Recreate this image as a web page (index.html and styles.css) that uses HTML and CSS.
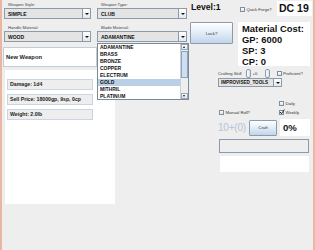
FILE: index.html
```html
<!DOCTYPE html>
<html>
<head>
    <title>Weapon Forge</title>
    <link rel="stylesheet" href="styles.css">
</head>
<body>
<div class="app">

    <div class="col col-a">
        <div class="field-label">Weapon Style:</div>
        <div class="combo"><span class="combo-text">SIMPLE</span><span class="combo-arrow"></span></div>
        <div class="field-label gap">Handle Material:</div>
        <div class="combo"><span class="combo-text">WOOD</span><span class="combo-arrow"></span></div>

        <div class="name-box">New Weapon</div>

        <div class="stats">
            <div class="stat">Damage: 1d4</div>
            <div class="stat">Sell Price: 18000gp, 9sp, 0cp</div>
            <div class="stat">Weight: 2.0lb</div>
        </div>
    </div>

    <div class="col col-b">
        <div class="field-label">Weapon Type:</div>
        <div class="combo wide"><span class="combo-text">CLUB</span><span class="combo-arrow"></span></div>
        <div class="field-label gap">Blade Material:</div>
        <div class="combo wide open">
            <span class="combo-text">ADAMANTINE</span><span class="combo-arrow"></span>

            <!-- popup list of the open combo -->
            <div class="popup">
                <ul class="popup-list">
                    <li>ADAMANTINE</li>
                    <li>BRASS</li>
                    <li>BRONZE</li>
                    <li>COPPER</li>
                    <li>ELECTRUM</li>
                    <li class="selected">GOLD</li>
                    <li>MITHRIL</li>
                    <li>PLATINUM</li>
                </ul>
                <div class="scrollbar">
                    <span class="scroll-btn up"></span>
                    <span class="scroll-track"><span class="scroll-thumb"></span></span>
                    <span class="scroll-btn down"></span>
                </div>
            </div>
        </div>
    </div>

    <div class="col col-c">
        <div class="top-row">
            <div class="level">Level:1</div>
            <label class="check-label quick"><span class="check"></span>Quick Forge?</label>
            <div class="dc">DC 19</div>
        </div>

        <div class="cost-row">
            <button class="btn lock">Lock?</button>
            <div class="cost">
                <div>Material Cost:</div>
                <div>GP: 6000</div>
                <div>SP: 3</div>
                <div>CP: 0</div>
            </div>
        </div>

        <div class="craft-area">
            <div class="skill-row">
                <span class="small-text">Crafting Skill</span>
                <span class="knob"></span>
                <span class="small-text">+0</span>
                <span class="knob"></span>
                <label class="check-label"><span class="check"></span>Proficient?</label>
            </div>
            <div class="combo tools"><span class="combo-text">IMPROVISED_TOOLS</span><span class="combo-arrow"></span></div>

            <div class="option-row daily-row">
                <label class="check-label"><span class="check"></span>Daily</label>
            </div>
            <div class="option-row">
                <label class="check-label"><span class="check"></span>Manual Roll?</label>
                <label class="check-label"><span class="check checked"><svg viewBox="0 0 6 6" width="6" height="6"><path d="M1 3 L2.5 4.6 L5.4 0.6" fill="none" stroke="#222" stroke-width="1"/></svg></span>Weekly</label>
            </div>

            <div class="roll-row">
                <span class="roll">10+(0)</span>
                <button class="btn craft">Craft</button>
                <div class="percent">0%</div>
            </div>

            <div class="progress"></div>
            <div class="log"></div>
        </div>
    </div>

</div>
</body>
</html>
```

FILE: styles.css
```css
body {
    margin: 0;
    padding: 0;
    background-color: #eeeeee;
    font-family: 'Liberation Sans', Arial, sans-serif;
    color: #222;
}

.app {
    width: 315px;
    height: 250px;
    box-sizing: border-box;
    border-left: 2px solid #e9b7a0;
    border-right: 2px solid #e9b7a0;
    display: flex;
    overflow: hidden;
}

.col {
    display: flex;
    flex-direction: column;
}

.col-a {
    width: 95px;
    padding-left: 2px;
    box-sizing: border-box;
}

.col-b {
    width: 93px;
}

.col-c {
    width: 123px;
}

.field-label {
    height: 8px;
    line-height: 9px;
    font-size: 4.2px;
    color: #444;
    padding-left: 4px;
}

.field-label.gap {
    margin-top: 4px;
}

/* combo boxes */
.combo {
    position: relative;
    width: 87px;
    height: 11px;
    box-sizing: border-box;
    border: 1px solid #8c9aaa;
    background-color: #e4e4e4;
    display: flex;
    align-items: center;
}

.combo.wide {
    width: 90px;
}

.combo-text {
    flex: 1;
    font-size: 5px;
    font-weight: bold;
    padding-left: 3px;
    color: #111;
}

.combo-arrow {
    width: 8px;
    height: 100%;
    box-sizing: border-box;
    border-left: 1px solid #8c9aaa;
    background: linear-gradient(#ffffff, #e2e8ee);
    position: relative;
}

.combo-arrow::after {
    content: "";
    position: absolute;
    left: 2px;
    top: 4px;
    border-left: 2px solid transparent;
    border-right: 2px solid transparent;
    border-top: 2px solid #111;
}

.popup {
    position: absolute;
    left: -1px;
    top: 11px;
    width: 92px;
    height: 57px;
    box-sizing: border-box;
    border: 1px solid #7a8a99;
    background-color: #ffffff;
    display: flex;
    z-index: 2;
}

.popup-list {
    list-style: none;
    margin: 0;
    padding: 0;
    flex: 1;
}

.popup-list li {
    height: 7px;
    line-height: 7px;
    font-size: 5px;
    font-weight: bold;
    padding-left: 2px;
    color: #111;
}

.popup-list li.selected {
    background-color: #b8cfe5;
}

.scrollbar {
    width: 7px;
    display: flex;
    flex-direction: column;
    border-left: 1px solid #c8d2dc;
    background-color: #eeeeee;
}

.scroll-btn {
    height: 6px;
    position: relative;
    background: linear-gradient(#ffffff, #dde5ee);
    border: 1px solid #9aa8b6;
    box-sizing: border-box;
}

.scroll-btn.up::after,
.scroll-btn.down::after {
    content: "";
    position: absolute;
    left: 1px;
    top: 1px;
    border-left: 1.5px solid transparent;
    border-right: 1.5px solid transparent;
}

.scroll-btn.up::after {
    border-bottom: 2px solid #111;
}

.scroll-btn.down::after {
    border-top: 2px solid #111;
}

.scroll-track {
    flex: 1;
    padding-top: 1px;
}

.scroll-thumb {
    display: block;
    height: 27px;
    box-sizing: border-box;
    border: 1px solid #8ba3bd;
    background-color: #cfdef0;
}

/* left column boxes */
.name-box {
    margin-top: 5px;
    margin-left: -1px;
    width: 94px;
    height: 20px;
    box-sizing: border-box;
    background-color: #ffffff;
    border: 1px solid #c4ccd4;
    font-size: 5.8px;
    font-weight: bold;
    line-height: 18px;
    padding-left: 2px;
}

.stats {
    margin-top: 3px;
    margin-left: 1px;
    width: 110px;
    height: 134px;
    box-sizing: border-box;
    background-color: #ffffff;
    padding: 9px 0 0 2px;
    display: flex;
    flex-direction: column;
    gap: 4px;
}

.stat {
    width: 86px;
    height: 11px;
    box-sizing: border-box;
    background-color: #eeeeee;
    border: 1px solid #c9d5e2;
    font-size: 5.2px;
    font-weight: bold;
    line-height: 9px;
    padding-left: 2px;
    color: #222;
}

/* right column */
.top-row {
    height: 20px;
    display: flex;
    align-items: flex-start;
}

.level {
    width: 49px;
    padding: 2px 0 0 1px;
    font-size: 8.6px;
    font-weight: bold;
    color: #111;
}

.check-label {
    display: flex;
    align-items: center;
    font-size: 4.2px;
    color: #333;
}

.check {
    width: 5px;
    height: 5px;
    box-sizing: border-box;
    border: 1px solid #7f8f9f;
    background: linear-gradient(#ffffff, #d8e2ec);
    margin-right: 1.5px;
    position: relative;
}

.check svg {
    position: absolute;
    left: -1px;
    top: -2px;
}

.quick {
    margin-top: 7px;
    width: 37px;
}

.dc {
    margin-top: 1px;
    width: 35px;
    height: 15px;
    background-color: #ffffff;
    font-size: 10.5px;
    font-weight: bold;
    line-height: 15px;
    padding-left: 2px;
    box-sizing: border-box;
    color: #111;
}

.cost-row {
    margin-top: 2px;
    display: flex;
    align-items: flex-start;
}

.btn {
    font-family: 'Liberation Sans', Arial, sans-serif;
    font-size: 4.4px;
    color: #333;
    border: 1px solid #8b9bab;
    border-radius: 1px;
    background: linear-gradient(#ffffff, #e4eef8 45%, #c2d5ea);
    padding: 0;
    cursor: pointer;
}

.lock {
    width: 43px;
    height: 22px;
}

.cost {
    margin-left: 5px;
    width: 72px;
    height: 44px;
    background-color: #ffffff;
    box-sizing: border-box;
    padding: 1px 0 0 4px;
    font-size: 9.4px;
    font-weight: bold;
    line-height: 11px;
    color: #111;
}

.craft-area {
    padding-left: 28px;
    display: flex;
    flex-direction: column;
}

.skill-row {
    margin-top: 2px;
    height: 10px;
    display: flex;
    align-items: center;
}

.small-text {
    font-size: 4.2px;
    color: #333;
}

.knob {
    width: 5px;
    height: 9px;
    box-sizing: border-box;
    border: 1px solid #8b9bab;
    border-radius: 2px;
    background: linear-gradient(90deg, #ffffff, #d6e2ee);
    margin: 0 2px 0 4px;
}

.skill-row .knob + .small-text {
    width: 8px;
}

.skill-row .check-label {
    margin-left: 5px;
}

.combo.tools {
    width: 64px;
    height: 9px;
}

.combo.tools .combo-text {
    font-size: 4.6px;
    padding-left: 2px;
}

.combo.tools .combo-arrow::after {
    top: 3px;
}

.option-row {
    display: flex;
    justify-content: space-between;
    align-items: center;
    width: 91px;
    height: 9px;
    padding-left: 1px;
    box-sizing: border-box;
}

.daily-row {
    margin-top: 12px;
    justify-content: flex-end;
}

.option-row .check-label:last-child {
    width: 30px;
}

.roll-row {
    margin-top: 2px;
    display: flex;
    align-items: center;
    height: 17px;
}

.roll {
    width: 31px;
    font-size: 10px;
    color: #b4c4d8;
    letter-spacing: -0.2px;
    padding-left: 0;
}

.craft {
    width: 28px;
    height: 16px;
}

.percent {
    margin-left: 3px;
    width: 30px;
    height: 17px;
    background-color: #ffffff;
    box-sizing: border-box;
    padding-left: 3px;
    font-size: 9.6px;
    font-weight: bold;
    line-height: 17px;
    color: #111;
}

.progress {
    margin-top: 3px;
    margin-left: 1px;
    width: 90px;
    height: 14px;
    box-sizing: border-box;
    border: 1px solid #8b9bab;
    background-color: #eeeeee;
}

.log {
    margin-top: 3px;
    margin-left: 2px;
    width: 89px;
    height: 16px;
    background-color: #ffffff;
}
```
